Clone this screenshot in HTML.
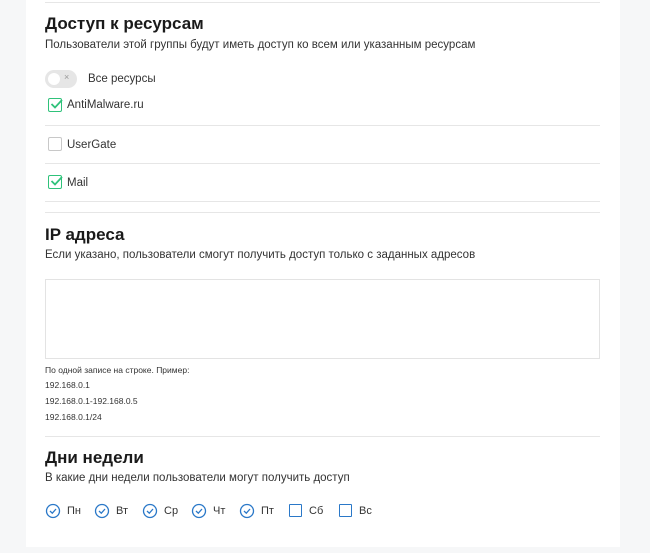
<!DOCTYPE html>
<html><head><meta charset="utf-8"><style>
*{margin:0;padding:0;box-sizing:border-box}
body{width:650px;height:553px;background:#f6f7f8;font-family:"Liberation Sans","DejaVu Sans",sans-serif;color:#222;position:relative;overflow:hidden}
.card{position:absolute;left:26px;top:0;width:594px;height:547px;background:#fff}
.a{position:absolute;white-space:nowrap}
.line{position:absolute;left:45px;width:555px;height:1px;background:#e6e6e6}
h2{position:absolute;left:45px;font-size:17px;font-weight:bold;color:#1a1a1a;white-space:nowrap}
.sub{position:absolute;left:45px;font-size:11.5px;color:#333;white-space:nowrap}
.cb{position:absolute;left:48px;width:14px;height:14px;border:1.5px solid #2fc27a;border-radius:2px}
.cb.off{border-color:#c8c8c8}
.lbl{position:absolute;left:67px;font-size:11.5px;color:#333}
.small{position:absolute;left:45px;font-size:8.5px;color:#333}
.day{position:absolute;top:505px;font-size:11px;color:#333}
</style></head><body>
<div class="card"></div>
<div class="line" style="top:2px"></div>
<h2 style="top:14px">Доступ к ресурсам</h2>
<div class="sub" style="top:39px">Пользователи этой группы будут иметь доступ ко всем или указанным ресурсам</div>
<div class="a" style="left:45px;top:70px;width:32px;height:18px;border-radius:9px;background:#e6e6e6"></div>
<div class="a" style="left:48px;top:73px;width:12px;height:12px;border-radius:6px;background:#fff"></div>
<div class="a" style="left:64px;top:72px;font-size:9px;color:#999">×</div>
<div class="lbl" style="left:88px;top:73px">Все ресурсы</div>
<div class="cb" style="top:98px"></div>
<svg class="a" style="left:50px;top:98px" width="14" height="12"><path d="M1.5 6 L5 9.5 L12 2" stroke="#2fc27a" stroke-width="1.8" fill="none"/></svg>
<div class="lbl" style="top:99px">AntiMalware.ru</div>
<div class="line" style="top:125px"></div>
<div class="cb off" style="top:137px"></div>
<div class="lbl" style="top:139px">UserGate</div>
<div class="line" style="top:163px"></div>
<div class="cb" style="top:175px"></div>
<svg class="a" style="left:50px;top:175px" width="14" height="12"><path d="M1.5 6 L5 9.5 L12 2" stroke="#2fc27a" stroke-width="1.8" fill="none"/></svg>
<div class="lbl" style="top:177px">Mail</div>
<div class="line" style="top:201px"></div>
<div class="line" style="top:212px"></div>
<h2 style="top:225px">IP адреса</h2>
<div class="sub" style="top:249px">Если указано, пользователи смогут получить доступ только с заданных адресов</div>
<div class="a" style="left:45px;top:279px;width:555px;height:80px;border:1px solid #e3e3e3"></div>
<div class="small" style="top:365px">По одной записе на строке. Пример:</div>
<div class="small" style="top:380px">192.168.0.1</div>
<div class="small" style="top:396px">192.168.0.1-192.168.0.5</div>
<div class="small" style="top:412px">192.168.0.1/24</div>
<div class="line" style="top:436px"></div>
<h2 style="top:448px">Дни недели</h2>
<div class="sub" style="top:472px">В какие дни недели пользователи могут получить доступ</div>
<svg class="a" style="left:45px;top:503px" width="16" height="16"><circle cx="8" cy="8" r="6.5" stroke="#2a78c8" stroke-width="1.3" fill="none"/><path d="M5 8 L7.3 10.2 L11 6" stroke="#2a78c8" stroke-width="1.3" fill="none"/></svg>
<div class="day" style="left:67px">Пн</div>
<svg class="a" style="left:94px;top:503px" width="16" height="16"><circle cx="8" cy="8" r="6.5" stroke="#2a78c8" stroke-width="1.3" fill="none"/><path d="M5 8 L7.3 10.2 L11 6" stroke="#2a78c8" stroke-width="1.3" fill="none"/></svg>
<div class="day" style="left:116px">Вт</div>
<svg class="a" style="left:142px;top:503px" width="16" height="16"><circle cx="8" cy="8" r="6.5" stroke="#2a78c8" stroke-width="1.3" fill="none"/><path d="M5 8 L7.3 10.2 L11 6" stroke="#2a78c8" stroke-width="1.3" fill="none"/></svg>
<div class="day" style="left:164px">Ср</div>
<svg class="a" style="left:191px;top:503px" width="16" height="16"><circle cx="8" cy="8" r="6.5" stroke="#2a78c8" stroke-width="1.3" fill="none"/><path d="M5 8 L7.3 10.2 L11 6" stroke="#2a78c8" stroke-width="1.3" fill="none"/></svg>
<div class="day" style="left:213px">Чт</div>
<svg class="a" style="left:239px;top:503px" width="16" height="16"><circle cx="8" cy="8" r="6.5" stroke="#2a78c8" stroke-width="1.3" fill="none"/><path d="M5 8 L7.3 10.2 L11 6" stroke="#2a78c8" stroke-width="1.3" fill="none"/></svg>
<div class="day" style="left:261px">Пт</div>
<div class="a" style="left:289px;top:504px;width:13px;height:13px;border:1.3px solid #2a78c8;border-radius:1px"></div>
<div class="day" style="left:309px">Сб</div>
<div class="a" style="left:339px;top:504px;width:13px;height:13px;border:1.3px solid #2a78c8;border-radius:1px"></div>
<div class="day" style="left:359px">Вс</div>
</body></html>
